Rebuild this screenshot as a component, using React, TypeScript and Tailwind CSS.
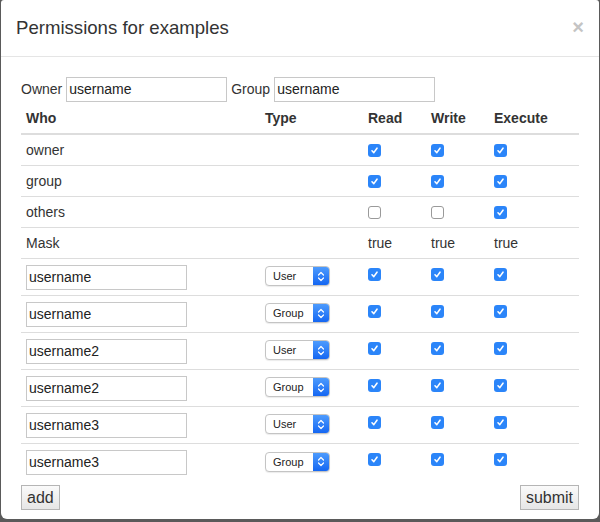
import React from 'react'

type Entry = { name: string; type: 'User' | 'Group' }

const entries: Entry[] = [
  { name: 'username', type: 'User' },
  { name: 'username', type: 'Group' },
  { name: 'username2', type: 'User' },
  { name: 'username2', type: 'Group' },
  { name: 'username3', type: 'User' },
  { name: 'username3', type: 'Group' },
]

const cols = 'grid grid-cols-[239px_103px_63px_63px_90px] items-center'

function Check({ on = true, up = false }: { on?: boolean; up?: boolean }) {
  const shift = up ? '-translate-y-[3px]' : ''
  if (!on) {
    return <span className={`block w-[13px] h-[13px] rounded-[3px] border border-[#9a9a9a] bg-white ${shift}`} />
  }
  return (
    <span className={`flex items-center justify-center w-[13px] h-[13px] rounded-[3px] bg-[#2b85f9] ${shift}`}>
      <svg width="9" height="9" viewBox="0 0 9 9">
        <path d="M2 4.8 L3.8 6.6 L7 2.2" fill="none" stroke="white" strokeWidth="1.6" strokeLinecap="round" strokeLinejoin="round" />
      </svg>
    </span>
  )
}

function Select({ value }: { value: string }) {
  return (
    <div className="flex h-[20px] w-[65px] -translate-y-px rounded-[4px] border border-[#c4c4c4] bg-white overflow-hidden shadow-[0_1px_1px_rgba(0,0,0,0.08)]">
      <span className="flex-1 pl-[7px] text-[11px] leading-[18px] text-[#222]">{value}</span>
      <span className="flex w-[16px] items-center justify-center bg-gradient-to-b from-[#4d9bfd] to-[#1466f2]">
        <svg width="8" height="11" viewBox="0 0 8 11">
          <path d="M1.5 4 L4 1.5 L6.5 4 M1.5 7 L4 9.5 L6.5 7" fill="none" stroke="white" strokeWidth="1.2" strokeLinecap="round" strokeLinejoin="round" />
        </svg>
      </span>
    </div>
  )
}

function TextBox({ value, w }: { value: string; w: string }) {
  return (
    <div className={`${w} h-[25px] border border-[#c8c8c8] bg-white px-[2px] text-[14px] leading-[23px] text-[#222]`}>
      {value}
    </div>
  )
}

export default function App() {
  return (
    <div className="w-[600px] h-[522px] bg-[#5a5a5a] px-px pb-[3px] font-['Liberation_Sans',Arial,sans-serif] text-[#333]">
      <div className="h-full bg-white rounded-b-[6px] rounded-t-[3px]">
        <div className="flex h-[57px] items-center justify-between border-b border-[#e5e5e5] pl-[15px] pr-[15px]">
          <h1 className="text-[18.6px] text-[#333]">Permissions for examples</h1>
          <span className="text-[20px] font-bold leading-none text-[#c4c4c4] -mt-[2px]">×</span>
        </div>

        <div className="px-[20px] pt-[20px]">
          <div className="flex items-center gap-[4px] text-[14px]">
            <span>Owner</span>
            <TextBox value="username" w="w-[161px]" />
            <span>Group</span>
            <TextBox value="username" w="w-[161px]" />
          </div>

          <div className={`${cols} h-[33px] pt-px border-b-2 border-[#dddddd] text-[14px] font-bold text-[#333] [&>span]:pl-[5px]`}>
            <span>Who</span>
            <span>Type</span>
            <span>Read</span>
            <span>Write</span>
            <span>Execute</span>
          </div>

          {[
            ['owner', true, true, true],
            ['group', true, true, true],
            ['others', false, false, true],
          ].map(([label, r, w, x]) => (
            <div key={label as string} className={`${cols} h-[31px] border-b border-[#dddddd] text-[14px] [&>*]:ml-[5px]`}>
              <span>{label as string}</span>
              <span />
              <Check on={r as boolean} />
              <Check on={w as boolean} />
              <Check on={x as boolean} />
            </div>
          ))}

          <div className={`${cols} h-[31px] border-b border-[#dddddd] text-[14px] [&>span]:pl-[5px]`}>
            <span>Mask</span>
            <span />
            <span>true</span>
            <span>true</span>
            <span>true</span>
          </div>

          {entries.map((e, i) => (
            <div
              key={i}
              className={`${cols} h-[37px] text-[14px] [&>*]:ml-[5px] ${i < entries.length - 1 ? 'border-b border-[#dddddd]' : ''}`}
            >
              <TextBox value={e.name} w="w-[161px]" />
              <Select value={e.type} />
              <Check up />
              <Check up />
              <Check up />
            </div>
          ))}

          <div className="mt-[4px] flex justify-between">
            <button className="h-[25px] px-[5px] border border-[#b5b5b5] bg-gradient-to-b from-[#fafafa] to-[#e6e6e6] text-[16px] leading-none text-[#333]">
              add
            </button>
            <button className="h-[25px] px-[5px] border border-[#b5b5b5] bg-gradient-to-b from-[#fafafa] to-[#e6e6e6] text-[16px] leading-none text-[#333]">
              submit
            </button>
          </div>
        </div>
      </div>
    </div>
  )
}
